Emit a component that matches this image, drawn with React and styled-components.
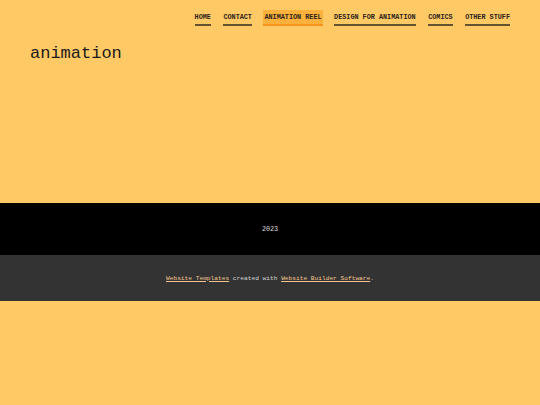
import React from 'react'
import styled, { createGlobalStyle } from 'styled-components'

const GlobalStyle = createGlobalStyle`
  html, body {
    margin: 0;
    padding: 0;
    background: #ffc966;
    font-family: "Liberation Mono", "DejaVu Sans Mono", monospace;
  }
`

// Styles
const Page = styled.div`
  width: 540px;
`
const Top = styled.div`
  height: 203px;
  padding: 0 30px;
  box-sizing: border-box;
`
const Nav = styled.nav`
  display: flex;
  justify-content: flex-end;
  align-items: flex-start;
  gap: 12.5px;
  padding-top: 10px;
`
const NavItem = styled.a`
  display: block;
  font-size: 6.8px;
  font-weight: bold;
  line-height: 14px;
  padding: 0 ${p => (p.$active ? '1px' : '0')};
  margin: 0 ${p => (p.$active ? '-1px' : '0')};
  color: #2a2418;
  text-decoration: none;
  border-bottom: 2px solid ${p => (p.$active ? '#f7941d' : '#655230')};
  background: ${p => (p.$active ? '#fbb13c' : 'transparent')};
`
const Title = styled.h1`
  margin: 18px 0 0;
  font-size: 17px;
  font-weight: normal;
  color: #1a1a1a;
  line-height: 20px;
`
const YearBand = styled.div`
  height: 52px;
  background: #000;
  color: #dddddd;
  display: flex;
  align-items: center;
  justify-content: center;
  font-size: 6.75px;
`
const Credits = styled.div`
  height: 46px;
  background: #333;
  color: #d6d6d6;
  display: flex;
  align-items: center;
  justify-content: center;
  font-size: 6.2px;
  a {
    color: #f2c38e;
    text-decoration: underline;
  }
`

const links = ['HOME', 'CONTACT', 'ANIMATION REEL', 'DESIGN FOR ANIMATION', 'COMICS', 'OTHER STUFF']

export default function App () {
  return (
    <Page>
      <GlobalStyle />
      <Top>
        <Nav>
          {links.map(l => (
            <NavItem key={l} href='#' $active={l === 'ANIMATION REEL'}>{l}</NavItem>
          ))}
        </Nav>
        <Title>animation</Title>
      </Top>
      <YearBand>2023</YearBand>
      <Credits>
        <span>
          <a href='#'>Website Templates</a> created with <a href='#'>Website Builder Software</a>.
        </span>
      </Credits>
    </Page>
  )
}
